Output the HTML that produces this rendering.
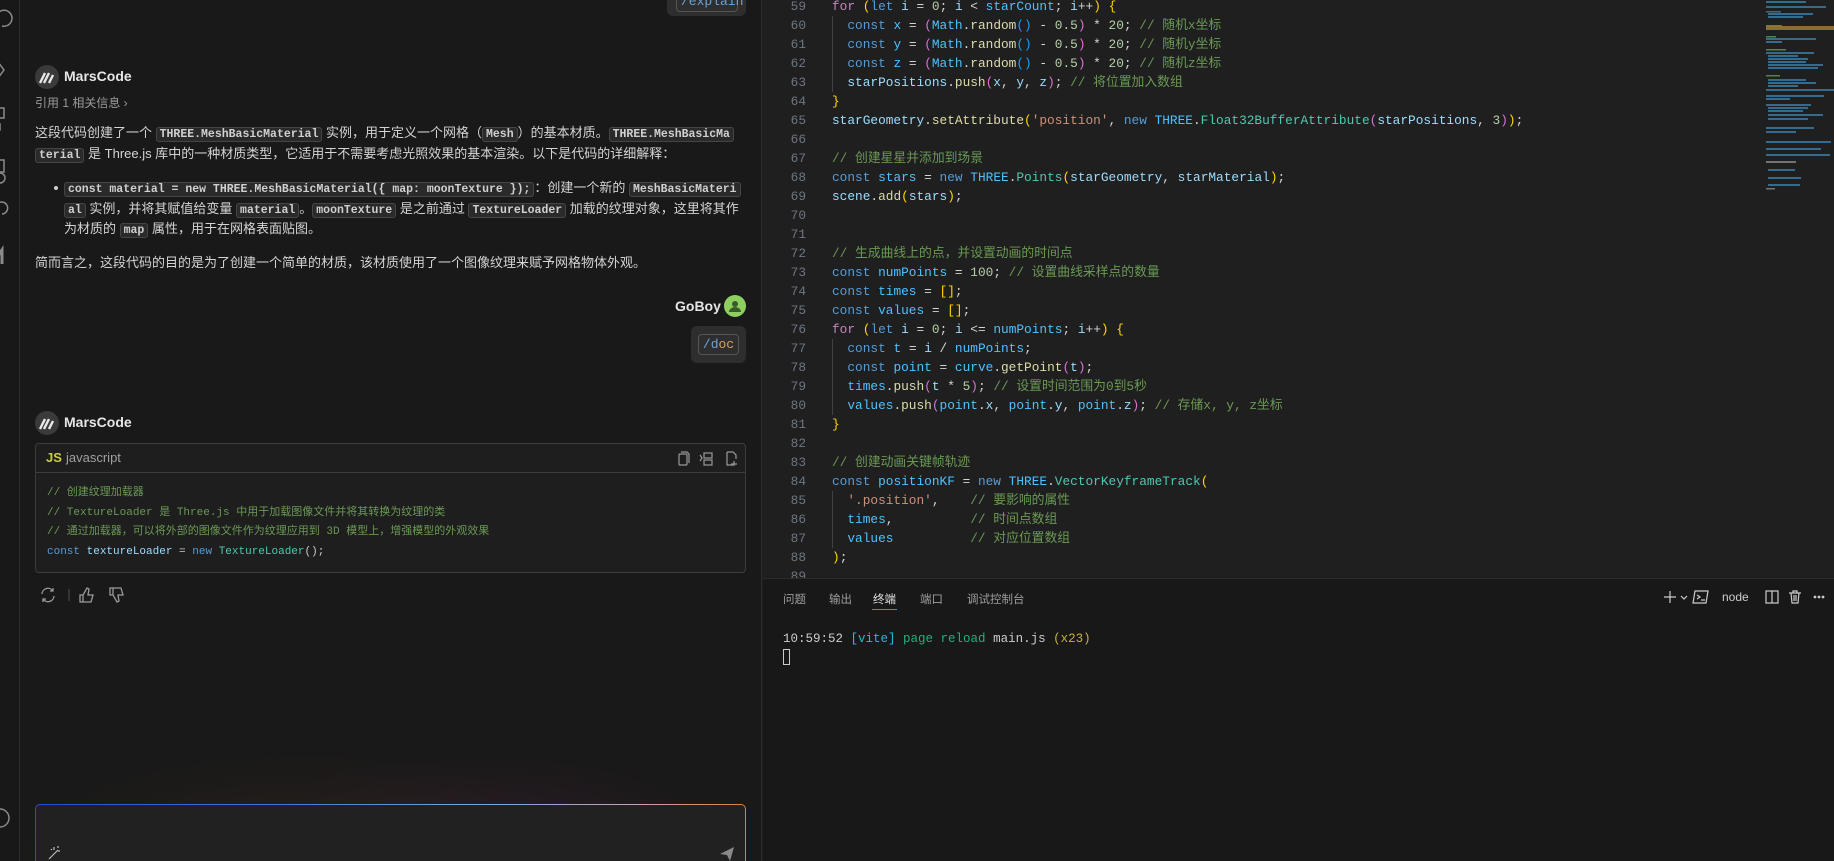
<!DOCTYPE html>
<html><head><meta charset="utf-8"><style>
*{margin:0;padding:0;box-sizing:border-box}
body{width:1834px;height:861px;overflow:hidden;background:#1f1f1f;position:relative;font-family:"Liberation Sans","Noto Sans CJK SC",sans-serif;color:#cccccc}
.abs{position:absolute}
#act{left:0;top:0;width:20px;height:861px;background:#181818;border-right:1px solid #2b2b2b}
#chat{left:20px;top:0;width:742px;height:861px;background:#191919;border-right:1px solid #2b2b2b;overflow:hidden}
.t{position:absolute;white-space:nowrap;font-size:13px;color:#d4d4d4;line-height:20px}
.ic{font-family:"Liberation Mono",monospace;font-weight:bold;font-size:11.5px;background:#2a2a2a;border:1px solid #454545;border-radius:3px;padding:0 3px;color:#d0d0d0}
.av{position:absolute;width:24px;height:24px;border-radius:50%;background:#3a3a3a}
.name{position:absolute;font-weight:bold;font-size:14px;color:#e6e6e6}
#ed{left:763px;top:0;width:1071px;height:578px;background:#1f1f1f;overflow:hidden}
.ln{position:absolute;left:0;width:43px;text-align:right;font-family:"Liberation Mono",monospace;font-size:12.8px;color:#6e7681;height:19px;line-height:19px}
.cl{position:absolute;left:69px;white-space:pre;font-family:"Liberation Mono","Noto Sans CJK SC",monospace;font-size:12.8px;height:19px;line-height:19px;color:#d4d4d4}
.k{color:#569cd6}.v{color:#4fc1ff}.f{color:#dcdcaa}.c{color:#6a9955}.n{color:#b5cea8}.s{color:#ce9178}.cls{color:#4ec9b0}.y{color:#ffd700}.p{color:#da70d6}.b{color:#179fff}.kw{color:#c586c0}.w{color:#9cdcfe}
#panel{left:763px;top:578px;width:1071px;height:283px;background:#181818;border-top:1px solid #2b2b2b}
.tab{position:absolute;top:12px;font-size:11.5px;color:#9d9d9d}
.cb div{white-space:pre;height:19.7px}
</style></head><body>
<div id="act" class="abs">
<svg width="20" height="861" style="position:absolute;left:0;top:0" fill="none" stroke="#8a8a8a" stroke-width="1.5">
<path d="M-4 18a8 8 0 1 1 6 8"/><path d="M-2 62l6 8-6 8"/><rect x="-6" y="108" width="10" height="10"/><rect x="-6" y="124" width="6" height="6"/><rect x="-6" y="160" width="10" height="12"/><circle cx="0" cy="178" r="5"/><path d="M-4 206a6 6 0 1 1 6 8"/><path d="M-2 256l4-6v14" stroke-width="3"/><circle cx="0" cy="818" r="9"/>
</svg></div>

<div id="chat" class="abs">
<div class="abs" style="left:647px;top:-8px;width:79px;height:24px;background:#2e2e2e;border-radius:6px"></div>
<div class="abs" style="left:656px;top:-6px;width:62px;height:18px;border:1px solid #555;border-radius:4px;font-family:'Liberation Mono',monospace;font-size:13px;color:#6aa3d8;line-height:14px;padding-left:4px">/explain</div>

<div class="av" style="left:15px;top:65px"></div>
<svg class="abs" style="left:19px;top:70px" width="16" height="14"><path d="M1 13l5-10M5 13l5-10M10 13l4-8" stroke="#e8e8e8" stroke-width="2.4"/></svg>
<div class="name" style="left:44px;top:68px">MarsCode</div>
<div class="t" style="left:15px;top:93px;font-size:12px;color:#9a9a9a">引用 1 相关信息 ›</div>

<div class="t" style="left:15px;top:123px">这段代码创建了一个 <span class="ic">THREE.MeshBasicMaterial</span> 实例，用于定义一个网格（<span class="ic">Mesh</span>）的基本材质。<span class="ic">THREE.MeshBasicMa</span></div>
<div class="t" style="left:15px;top:144px"><span class="ic">terial</span> 是 Three.js 库中的一种材质类型，它适用于不需要考虑光照效果的基本渲染。以下是代码的详细解释：</div>
<div class="abs" style="left:34px;top:186px;width:4px;height:4px;border-radius:50%;background:#ccc"></div>
<div class="t" style="left:44px;top:178px"><span class="ic">const material = new THREE.MeshBasicMaterial({ map: moonTexture });</span>：创建一个新的 <span class="ic">MeshBasicMateri</span></div>
<div class="t" style="left:44px;top:199px"><span class="ic">al</span> 实例，并将其赋值给变量 <span class="ic">material</span>。<span class="ic">moonTexture</span> 是之前通过 <span class="ic">TextureLoader</span> 加载的纹理对象，这里将其作</div>
<div class="t" style="left:44px;top:219px">为材质的 <span class="ic">map</span> 属性，用于在网格表面贴图。</div>
<div class="t" style="left:15px;top:253px">简而言之，这段代码的目的是为了创建一个简单的材质，该材质使用了一个图像纹理来赋予网格物体外观。</div>

<div class="name" style="left:655px;top:298px">GoBoy</div>
<div class="abs" style="left:704px;top:295px;width:22px;height:22px;border-radius:50%;background:#8fcf5f"></div>
<svg class="abs" style="left:704px;top:295px" width="22" height="22"><circle cx="11" cy="9" r="3" fill="#3a5a2a"/><path d="M5 17a6 5 0 0 1 12 0z" fill="#3a5a2a"/></svg>
<div class="abs" style="left:671px;top:326px;width:55px;height:37px;background:#2e2e2e;border-radius:6px"></div>
<div class="abs" style="left:678px;top:334px;width:41px;height:21px;border:1px solid #555;border-radius:4px;font-family:'Liberation Mono',monospace;font-size:13px;line-height:19px;text-align:center"><span style="color:#6aa3d8">/d</span><span style="color:#d8a060">oc</span></div>

<div class="av" style="left:15px;top:411px"></div>
<svg class="abs" style="left:19px;top:416px" width="16" height="14"><path d="M1 13l5-10M5 13l5-10M10 13l4-8" stroke="#e8e8e8" stroke-width="2.4"/></svg>
<div class="name" style="left:44px;top:414px">MarsCode</div>

<div class="abs" style="left:15px;top:443px;width:711px;height:130px;border:1px solid #3c3c3c;border-radius:4px;background:#1e1e1e">
 <div style="height:29px;border-bottom:1px solid #3c3c3c;position:relative">
  <span class="abs" style="left:10px;top:6px;font-weight:bold;font-size:13px;color:#cbcb41">JS</span>
  <span class="abs" style="left:30px;top:6px;font-size:13px;color:#a0a0a0">javascript</span>
  <svg class="abs" style="left:640px;top:7px" width="70" height="16" fill="none" stroke="#999" stroke-width="1.2"><rect x="3" y="3" width="8" height="11" rx="1"/><path d="M5 1h6l2 2v9"/><path d="M24 4l2 3-2 3"/><rect x="28" y="2" width="8" height="5"/><rect x="28" y="9" width="8" height="5"/><path d="M51 1h6l3 3v4M51 1v13h6M58 10v5M55 13h6"/></svg>
 </div>
 <div class="cb" style="padding:11px 0 0 11px;font-family:'Liberation Mono','Noto Sans CJK SC',monospace;font-size:11px;line-height:19.7px"><div class="c">// 创建纹理加载器</div><div class="c">// TextureLoader 是 Three.js 中用于加载图像文件并将其转换为纹理的类</div><div class="c">// 通过加载器，可以将外部的图像文件作为纹理应用到 3D 模型上，增强模型的外观效果</div><div><span class="k">const</span> <span class="w">textureLoader</span> = <span class="k">new</span> <span class="cls">TextureLoader</span>();</div></div>
</div>
<svg class="abs" style="left:19px;top:586px" width="110" height="18" fill="none" stroke="#9a9a9a" stroke-width="1.3"><path d="M3 8a6 6 0 0 1 11-3M15 10a6 6 0 0 1-11 3M14 2v3h-3M4 16v-3h3"/><path d="M30 3v12" stroke="#444"/><path d="M44 16h8l2-7h-5l1-6-2-1-4 7v7zM41 9h3v7h-3z"/><path d="M74 2h8l2 7h-5l1 6-2 1-4-7V2zM71 2h3v7h-3z"/></svg>

<div class="abs" style="left:0;top:640px;width:742px;height:221px;background:radial-gradient(ellipse 300px 120px at 280px 230px,rgba(70,45,30,0.35),transparent),radial-gradient(ellipse 260px 110px at 470px 220px,rgba(80,30,60,0.35),transparent)"></div>
<div class="abs" style="left:15px;top:804px;width:711px;height:70px;border-radius:5px;padding:1px;background:linear-gradient(90deg,#2a4ad0,#3d7bd8 35%,#6aa8e0 60%,#c8a0b8 85%,#e08030)">
 <div style="width:100%;height:100%;background:#212121;border-radius:4px"></div></div>
<svg class="abs" style="left:27px;top:846px" width="14" height="15" stroke="#bbb" stroke-width="1.2" fill="none"><path d="M2 13L11 4M7 1v3M11 0v2M13 5h-2M4 3l1 1"/></svg>
<svg class="abs" style="left:699px;top:846px" width="16" height="15"><path d="M1 8L15 1 11 15 8 9z" fill="#8a8a8a"/></svg>
</div>

<div id="ed" class="abs">
<div class="ln" style="top:-3px">59</div><div class="cl" style="top:-3px"><span class="kw">for</span> <span class="y">(</span><span class="k">let</span> <span class="w">i</span> = <span class="n">0</span>; <span class="w">i</span> &lt; <span class="v">starCount</span>; <span class="w">i</span>++<span class="y">)</span> <span class="y">{</span></div>
<div class="ln" style="top:16px">60</div><div class="cl" style="top:16px">  <span class="k">const</span> <span class="v">x</span> = <span class="p">(</span><span class="v">Math</span>.<span class="f">random</span><span class="b">()</span> - <span class="n">0.5</span><span class="p">)</span> * <span class="n">20</span>; <span class="c">// 随机x坐标</span></div>
<div class="ln" style="top:35px">61</div><div class="cl" style="top:35px">  <span class="k">const</span> <span class="v">y</span> = <span class="p">(</span><span class="v">Math</span>.<span class="f">random</span><span class="b">()</span> - <span class="n">0.5</span><span class="p">)</span> * <span class="n">20</span>; <span class="c">// 随机y坐标</span></div>
<div class="ln" style="top:54px">62</div><div class="cl" style="top:54px">  <span class="k">const</span> <span class="v">z</span> = <span class="p">(</span><span class="v">Math</span>.<span class="f">random</span><span class="b">()</span> - <span class="n">0.5</span><span class="p">)</span> * <span class="n">20</span>; <span class="c">// 随机z坐标</span></div>
<div class="ln" style="top:73px">63</div><div class="cl" style="top:73px">  <span class="w">starPositions</span>.<span class="f">push</span><span class="p">(</span><span class="w">x</span>, <span class="w">y</span>, <span class="w">z</span><span class="p">)</span>; <span class="c">// 将位置加入数组</span></div>
<div class="ln" style="top:92px">64</div><div class="cl" style="top:92px"><span class="y">}</span></div>
<div class="ln" style="top:111px">65</div><div class="cl" style="top:111px"><span class="w">starGeometry</span>.<span class="f">setAttribute</span><span class="y">(</span><span class="s">'position'</span>, <span class="k">new</span> <span class="v">THREE</span>.<span class="cls">Float32BufferAttribute</span><span class="p">(</span><span class="w">starPositions</span>, <span class="n">3</span><span class="p">)</span><span class="y">)</span>;</div>
<div class="ln" style="top:130px">66</div>
<div class="ln" style="top:149px">67</div><div class="cl" style="top:149px"><span class="c">// 创建星星并添加到场景</span></div>
<div class="ln" style="top:168px">68</div><div class="cl" style="top:168px"><span class="k">const</span> <span class="v">stars</span> = <span class="k">new</span> <span class="v">THREE</span>.<span class="cls">Points</span><span class="y">(</span><span class="w">starGeometry</span>, <span class="w">starMaterial</span><span class="y">)</span>;</div>
<div class="ln" style="top:187px">69</div><div class="cl" style="top:187px"><span class="w">scene</span>.<span class="f">add</span><span class="y">(</span><span class="w">stars</span><span class="y">)</span>;</div>
<div class="ln" style="top:206px">70</div>
<div class="ln" style="top:225px">71</div>
<div class="ln" style="top:244px">72</div><div class="cl" style="top:244px"><span class="c">// 生成曲线上的点，并设置动画的时间点</span></div>
<div class="ln" style="top:263px">73</div><div class="cl" style="top:263px"><span class="k">const</span> <span class="v">numPoints</span> = <span class="n">100</span>; <span class="c">// 设置曲线采样点的数量</span></div>
<div class="ln" style="top:282px">74</div><div class="cl" style="top:282px"><span class="k">const</span> <span class="v">times</span> = <span class="y">[]</span>;</div>
<div class="ln" style="top:301px">75</div><div class="cl" style="top:301px"><span class="k">const</span> <span class="v">values</span> = <span class="y">[]</span>;</div>
<div class="ln" style="top:320px">76</div><div class="cl" style="top:320px"><span class="kw">for</span> <span class="y">(</span><span class="k">let</span> <span class="w">i</span> = <span class="n">0</span>; <span class="w">i</span> &lt;= <span class="v">numPoints</span>; <span class="w">i</span>++<span class="y">)</span> <span class="y">{</span></div>
<div class="ln" style="top:339px">77</div><div class="cl" style="top:339px">  <span class="k">const</span> <span class="v">t</span> = <span class="w">i</span> / <span class="v">numPoints</span>;</div>
<div class="ln" style="top:358px">78</div><div class="cl" style="top:358px">  <span class="k">const</span> <span class="v">point</span> = <span class="v">curve</span>.<span class="f">getPoint</span><span class="p">(</span><span class="w">t</span><span class="p">)</span>;</div>
<div class="ln" style="top:377px">79</div><div class="cl" style="top:377px">  <span class="v">times</span>.<span class="f">push</span><span class="p">(</span><span class="w">t</span> * <span class="n">5</span><span class="p">)</span>; <span class="c">// 设置时间范围为0到5秒</span></div>
<div class="ln" style="top:396px">80</div><div class="cl" style="top:396px">  <span class="v">values</span>.<span class="f">push</span><span class="p">(</span><span class="v">point</span>.<span class="w">x</span>, <span class="v">point</span>.<span class="w">y</span>, <span class="v">point</span>.<span class="w">z</span><span class="p">)</span>; <span class="c">// 存储x, y, z坐标</span></div>
<div class="ln" style="top:415px">81</div><div class="cl" style="top:415px"><span class="y">}</span></div>
<div class="ln" style="top:434px">82</div>
<div class="ln" style="top:453px">83</div><div class="cl" style="top:453px"><span class="c">// 创建动画关键帧轨迹</span></div>
<div class="ln" style="top:472px">84</div><div class="cl" style="top:472px"><span class="k">const</span> <span class="v">positionKF</span> = <span class="k">new</span> <span class="v">THREE</span>.<span class="cls">VectorKeyframeTrack</span><span class="y">(</span></div>
<div class="ln" style="top:491px">85</div><div class="cl" style="top:491px">  <span class="s">'.position'</span>,    <span class="c">// 要影响的属性</span></div>
<div class="ln" style="top:510px">86</div><div class="cl" style="top:510px">  <span class="v">times</span>,          <span class="c">// 时间点数组</span></div>
<div class="ln" style="top:529px">87</div><div class="cl" style="top:529px">  <span class="v">values</span>          <span class="c">// 对应位置数组</span></div>
<div class="ln" style="top:548px">88</div><div class="cl" style="top:548px"><span class="y">)</span>;</div>
<div class="ln" style="top:567px">89</div>
<div class="abs" style="left:69px;top:16px;width:1px;height:76px;background:#404040"></div>
<div class="abs" style="left:69px;top:339px;width:1px;height:76px;background:#404040"></div>
<div class="abs" style="left:69px;top:491px;width:1px;height:57px;background:#404040"></div>
<svg class="abs" style="left:1003px;top:0" width="68" height="200" opacity="0.8">
<g fill="#3b7fa8">
<rect x="0" y="1" width="40" height="2"/><rect x="0" y="6" width="60" height="2"/><rect x="0" y="11" width="15" height="1.5"/><rect x="2" y="13" width="45" height="2"/><rect x="2" y="16" width="35" height="2"/><rect x="0" y="25" width="16" height="1.5" fill="#6a9955"/><rect x="0" y="36" width="10" height="1.5" fill="#6a9955"/><rect x="0" y="38" width="50" height="2"/><rect x="0" y="41" width="16" height="2"/>
<rect x="0" y="49" width="20" height="1.5" fill="#6a9955"/><rect x="0" y="52" width="48" height="2"/><rect x="2" y="55" width="30" height="2"/><rect x="2" y="58" width="40" height="2"/><rect x="2" y="61" width="38" height="2"/><rect x="2" y="64" width="55" height="2"/><rect x="2" y="67" width="50" height="2"/>
<rect x="0" y="75" width="14" height="1.5" fill="#6a9955"/><rect x="2" y="79" width="38" height="2"/><rect x="2" y="82" width="48" height="2"/><rect x="2" y="85" width="30" height="2"/><rect x="0" y="89" width="68" height="2"/><rect x="0" y="95" width="58" height="2"/><rect x="0" y="98" width="24" height="2"/>
<rect x="0" y="104" width="45" height="2"/><rect x="2" y="107" width="40" height="2"/><rect x="2" y="110" width="35" height="2"/><rect x="2" y="114" width="55" height="2"/><rect x="2" y="118" width="40" height="2"/><rect x="0" y="127" width="48" height="2"/><rect x="0" y="131" width="30" height="2"/>
<rect x="0" y="141" width="65" height="2"/><rect x="0" y="148" width="55" height="2"/><rect x="0" y="154" width="64" height="2"/><rect x="0" y="161" width="30" height="2" fill="#888"/><rect x="2" y="169" width="27" height="2"/><rect x="2" y="177" width="33" height="2"/><rect x="2" y="184" width="32" height="2"/><rect x="0" y="188" width="9" height="1.5" fill="#888"/>
</g>
<rect x="0" y="26" width="68" height="4" fill="#c89a40" opacity="0.8"/>
</svg>
</div>

<div id="panel" class="abs">
<div class="tab" style="left:20px">问题</div>
<div class="tab" style="left:66px">输出</div>
<div class="tab" style="left:110px;color:#e0e0e0">终端</div>
<div class="abs" style="left:109px;top:30px;width:25px;height:1px;background:#3a8ee6"></div>
<div class="tab" style="left:157px">端口</div>
<div class="tab" style="left:204px">调试控制台</div>
<svg class="abs" style="left:899px;top:10px" width="170" height="16" fill="none" stroke="#ccc" stroke-width="1.2"><path d="M2 8h12M8 2v12"/><path d="M19 7l3 3 3-3"/><path d="M33 2h13l-2 12H31z"/><path d="M35 6l3 2-3 2M39 11h4"/><rect x="104" y="2" width="12" height="12"/><path d="M110 2v12"/><path d="M127 4h12M131 4V2h4v2M129 4l1 10h6l1-10M132 6v6M134 6v6"/><circle cx="153" cy="8" r=".8" fill="#ccc"/><circle cx="157" cy="8" r=".8" fill="#ccc"/><circle cx="161" cy="8" r=".8" fill="#ccc"/></svg>
<div class="abs" style="left:959px;top:11px;font-size:12px;color:#ccc">node</div>
<div class="abs" style="left:20px;top:53px;font-family:'Liberation Mono',monospace;font-size:12.5px;white-space:pre;color:#ccc">10:59:52 <span style="color:#29b8db">[vite]</span> <span style="color:#23b07a">page reload</span> main.js <span style="color:#c8b040">(x23)</span></div>
<div class="abs" style="left:20px;top:70px;width:7px;height:16px;border:1px solid #ccc"></div>
</div>
</body></html>
